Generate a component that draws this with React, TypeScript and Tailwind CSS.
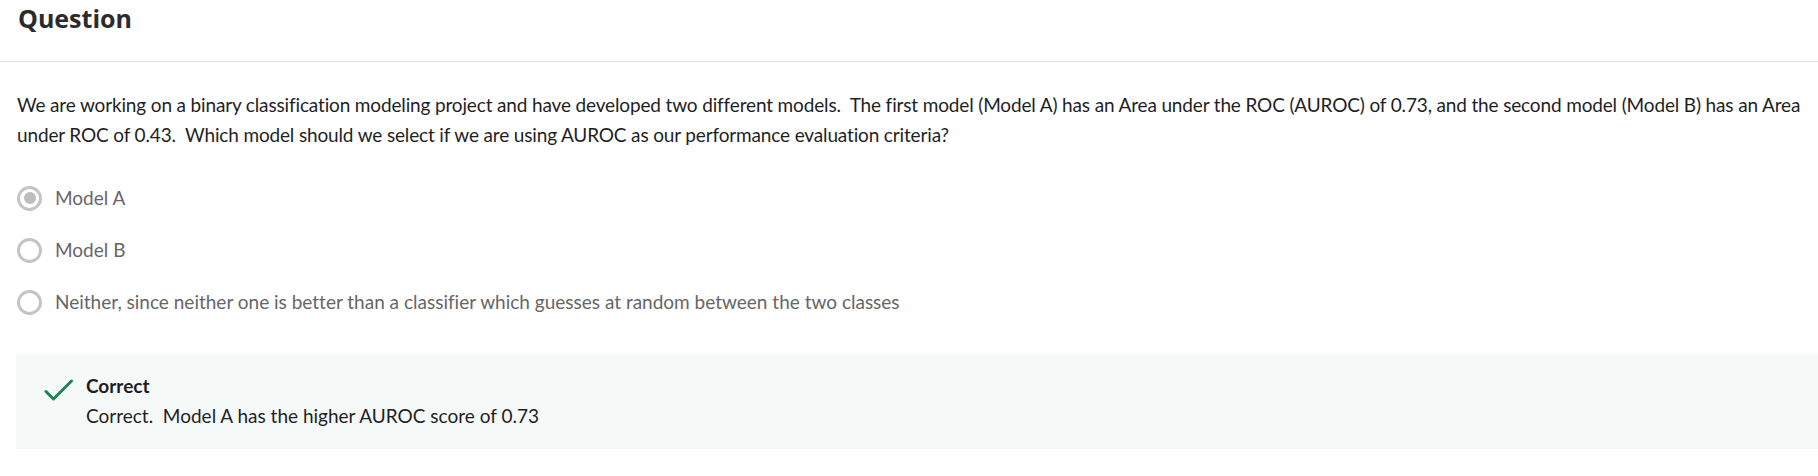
export default function App() {
  const options = [
    { label: 'Model A', checked: true },
    { label: 'Model B', checked: false },
    {
      label:
        'Neither, since neither one is better than a classifier which guesses at random between the two classes',
      checked: false,
    },
  ]

  return (
    <div className="w-[1818px] h-[476px] bg-white font-['Lato','Liberation_Sans',sans-serif] [font-variant-ligatures:none] overflow-hidden">
      {/* header */}
      <div className="h-[62px] border-b border-[#e0e0e0] px-[18px] pt-[1px]">
        <h2 className="font-['Open_Sans',sans-serif] text-[25px] font-bold leading-[34px] text-[#2b2b2b]">
          Question
        </h2>
      </div>

      <div className="pt-[28px]">
        <p className="pl-[17px] pr-[4px] text-[19px] leading-[30px] tracking-[-0.15px] text-[#1f1f1f] whitespace-pre-wrap">
          {'We are working on a binary classification modeling project and have developed two different models.  The first model (Model A) has an Area under the ROC (AUROC) of 0.73, and the second model (Model B) has an Area under ROC of 0.43.  Which model should we select if we are using AUROC as our performance evaluation criteria?'}
        </p>

        <div className="mt-[33px] flex flex-col gap-[22px] px-[17px]">
          {options.map((o) => (
            <label key={o.label} className="flex items-center gap-[13px] h-[30px]">
              <span className="w-[25px] h-[25px] rounded-full border-[3px] border-[#c4c4c4] flex items-center justify-center shrink-0">
                {o.checked && <span className="w-[12px] h-[12px] rounded-full bg-[#bdbdbd]" />}
              </span>
              <span className="text-[19px] leading-[30px] text-[#666666]">{o.label}</span>
            </label>
          ))}
        </div>

        <div className="mt-[37px] ml-[16px] h-[95px] bg-[#f5f9f8] flex pt-[17px] pl-[28px]">
          <svg className="w-[30px] h-[24px] mt-[7px] shrink-0" viewBox="0 0 30 24" fill="none">
            <path d="M2 13.5 L9.5 21 L27.5 3" stroke="#1f8354" strokeWidth="3" strokeLinecap="round" strokeLinejoin="round" />
          </svg>
          <div className="ml-[12px]">
            <div className="text-[19px] leading-[30px] font-bold text-[#1f1f1f]">Correct</div>
            <div className="text-[19px] leading-[30px] text-[#1f1f1f] whitespace-pre-wrap">
              {'Correct.  Model A has the higher AUROC score of 0.73'}
            </div>
          </div>
        </div>
      </div>
    </div>
  )
}
